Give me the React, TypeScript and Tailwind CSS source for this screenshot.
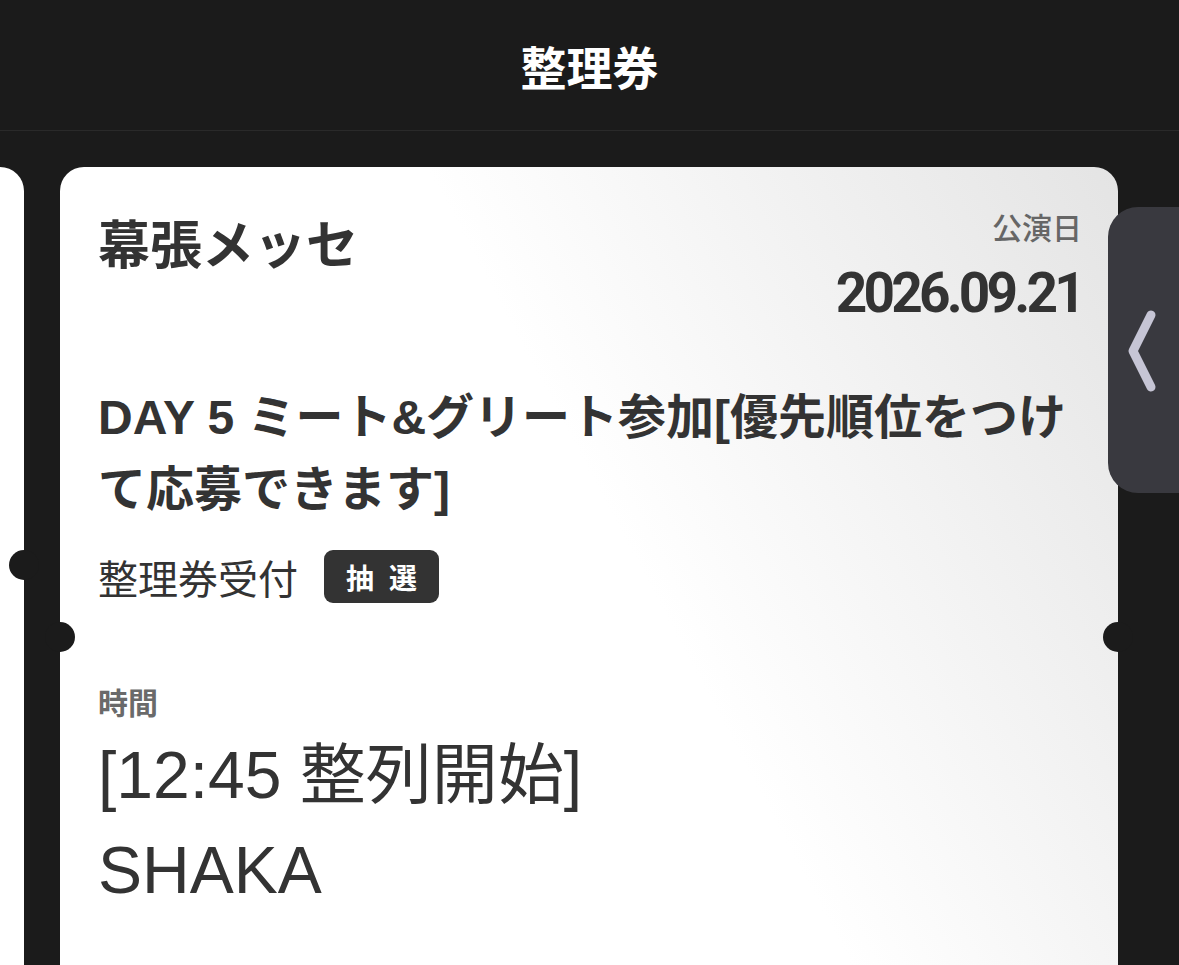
import React from "react";

const jp = { fontFamily: '"Noto Sans CJK JP", sans-serif' };
const latinJp = { fontFamily: '"Liberation Sans", "Noto Sans CJK JP", sans-serif' };

function Notch({ side, top }: { side: "left" | "right"; top: string }) {
  return (
    <span
      className={`absolute h-[30px] w-[30px] rounded-full bg-[#1b1b1b] ${top} ${
        side === "left" ? "-left-[15px]" : "-right-[15px]"
      }`}
    />
  );
}

function TicketCard() {
  return (
    <section className="relative h-[900px] w-[1058px] shrink-0 rounded-[24px] bg-[linear-gradient(62deg,#ffffff_55%,#e4e4e4_100%)] pl-[38px] pr-[36px] pt-[44px] text-[#333333]">
      <div className="flex items-start justify-between">
        <h2 className="mt-[5px] text-[52px] font-bold leading-[52px]" style={jp}>
          幕張メッセ
        </h2>
        <div className="text-right">
          <p className="text-[30px] font-medium leading-[30px] text-[#666666]" style={jp}>
            公演日
          </p>
          <p
            className="mt-[25px] text-[55px] font-bold leading-[55px] tracking-[-3.8px]"
            style={{ fontFamily: "Roboto, sans-serif" }}
          >
            2026.09.21
          </p>
        </div>
      </div>

      <h3 className="mt-[61px] text-[48px] font-bold leading-[72px]" style={latinJp}>
        DAY 5 ミート&amp;グリート参加[優先順位をつけ
        <br />
        て応募できます]
      </h3>

      <div className="mt-[24px] flex items-center gap-[26px]">
        <span className="text-[40px] leading-[40px]" style={jp}>
          整理券受付
        </span>
        <span
          className="flex h-[53px] w-[115px] items-center justify-center gap-[15px] rounded-[9px] bg-[#333333] text-[28px] font-bold leading-none text-white"
          style={jp}
        >
          <span>抽</span>
          <span>選</span>
        </span>
      </div>

      <p className="mt-[83px] text-[30px] font-bold leading-[30px] text-[#6a6a6a]" style={jp}>
        時間
      </p>
      <p className="mt-[12px] text-[66px] leading-[95px]" style={latinJp}>
        [12:45 整列開始]
      </p>
      <p className="text-[66px] leading-[95px]" style={latinJp}>
        SHAKA
      </p>

      <Notch side="left" top="top-[455px]" />
      <Notch side="right" top="top-[455px]" />
    </section>
  );
}

export default function App() {
  return (
    <div className="relative h-[965px] w-[1179px] overflow-hidden bg-[#1b1b1b]">
      <header className="flex h-[131px] items-center justify-center border-b border-[#2a2a2a]">
        <h1 className="text-[46px] font-bold leading-none text-white" style={jp}>
          整理券
        </h1>
      </header>

      <div className="flex gap-[36px] pt-[36px]">
        {/* previous ticket, mostly off-screen */}
        <div className="relative -ml-[1034px] h-[900px] w-[1058px] shrink-0 rounded-[24px] bg-white">
          <Notch side="right" top="top-[383px]" />
        </div>
        <TicketCard />
      </div>

      {/* side drawer handle */}
      <button className="absolute right-0 top-[207px] flex h-[286px] w-[71px] items-start rounded-l-[30px] bg-[#39393f]">
        <svg width="71" height="286" viewBox="0 0 71 286" fill="none">
          <path
            d="M43 108 L25 144 L43 180"
            stroke="#c6c5d5"
            strokeWidth="9"
            strokeLinecap="round"
            strokeLinejoin="round"
          />
        </svg>
      </button>
    </div>
  );
}
